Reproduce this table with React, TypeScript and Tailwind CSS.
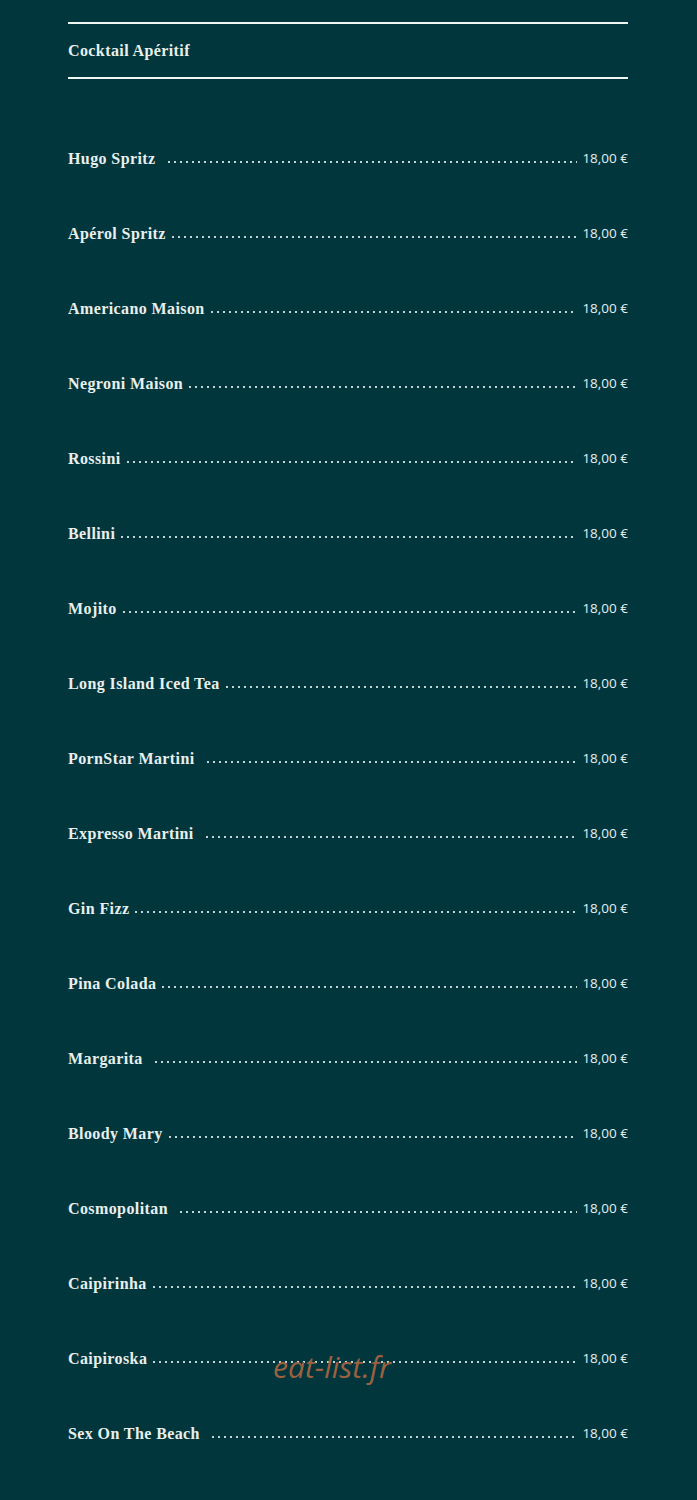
const items: { name: string; gap?: boolean }[] = [
  { name: "Hugo Spritz", gap: true },
  { name: "Apérol Spritz" },
  { name: "Americano Maison" },
  { name: "Negroni Maison" },
  { name: "Rossini" },
  { name: "Bellini" },
  { name: "Mojito" },
  { name: "Long Island Iced Tea" },
  { name: "PornStar Martini", gap: true },
  { name: "Expresso Martini", gap: true },
  { name: "Gin Fizz" },
  { name: "Pina Colada" },
  { name: "Margarita", gap: true },
  { name: "Bloody Mary" },
  { name: "Cosmopolitan", gap: true },
  { name: "Caipirinha" },
  { name: "Caipiroska" },
  { name: "Sex On The Beach", gap: true },
];

function Row({ name, gap }: { name: string; gap?: boolean }) {
  return (
    <div className="flex h-[75px] items-center">
      <span
        className={`font-['Liberation_Serif',serif] text-[16px] font-bold tracking-[0.4px] text-[#e9efec] ${
          gap ? "pr-[10px]" : "pr-[4px]"
        }`}
      >
        {name}
      </span>
      <div className="mt-[7px] h-[2px] flex-1 bg-[radial-gradient(circle,#c3d5d4_0.8px,transparent_1.1px)] bg-[length:6px_2px] bg-repeat-x" />
      <span className="pl-[5px] font-['Open_Sans',sans-serif] text-[13.5px] font-normal text-[#e6eeed]">
        18,00 €
      </span>
    </div>
  );
}

export default function App() {
  return (
    <div className="relative min-h-[1500px] bg-[#01363d] pt-[22px]">
      <div className="mx-[68px] w-[560px]">
        <div className="flex h-[57px] items-center border-y-2 border-[#eef5f3]">
          <h2 className="font-['Liberation_Serif',serif] text-[16px] font-bold tracking-[0.4px] text-[#e9efec]">
            Cocktail Apéritif
          </h2>
        </div>
        <div className="mt-[42px]">
          {items.map((it) => (
            <Row key={it.name} name={it.name} gap={it.gap} />
          ))}
        </div>
      </div>
      <div className="absolute left-[273px] top-[1344px] font-['Open_Sans',sans-serif] text-[30px] italic text-[#9b6140]">
        eat-list.fr
      </div>
    </div>
  );
}
